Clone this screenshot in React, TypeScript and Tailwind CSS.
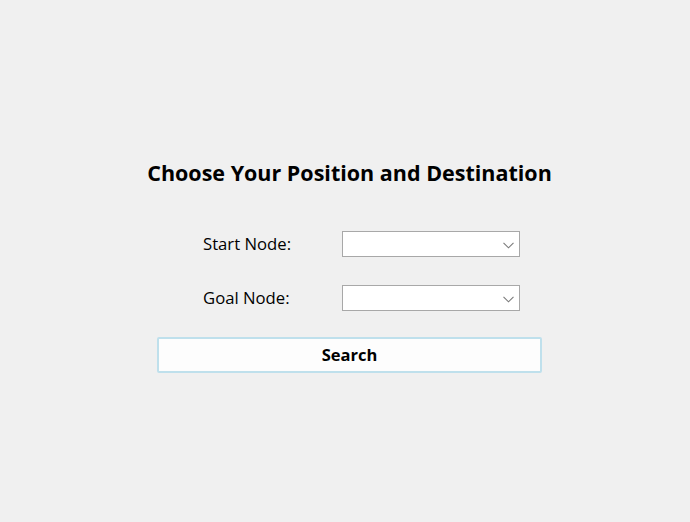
import React from 'react';

const Chevron = () => (
  <svg width="11" height="7" viewBox="0 0 11 7" className="absolute right-[5px] top-[10px]">
    <path d="M0.5 0.8 L5.5 5.8 L10.5 0.8" fill="none" stroke="#7a7a7a" strokeWidth="1.1" />
  </svg>
);

const Combo = () => (
  <div className="relative w-[178px] h-[26px] bg-white border border-[#a8a8a8]">
    <Chevron />
  </div>
);

const App = () => {
  return (
    <div
      className="w-[690px] h-[522px] bg-[#f0f0f0] text-black"
      style={{ fontFamily: '"Open Sans", "Noto Sans", sans-serif' }}
    >
      <div className="ml-[157px] w-[385px] pt-[158px] flex flex-col">
        <h1 className="-mx-[30px] text-center whitespace-nowrap font-bold text-[21.5px] leading-[30px]">
          Choose Your Position and Destination
        </h1>
        <div className="mt-[43px] flex items-center h-[26px]">
          <span className="ml-[46px] w-[139px] text-[16.7px]">Start Node:</span>
          <Combo />
        </div>
        <div className="mt-[28px] flex items-center h-[26px]">
          <span className="ml-[46px] w-[139px] text-[16.7px]">Goal Node:</span>
          <Combo />
        </div>
        <button className="mt-[26px] h-[36px] w-full border-2 border-[#bfe0ec] bg-[#fdfdfd] rounded-[2px] font-bold text-[16.5px]">
          Search
        </button>
      </div>
    </div>
  );
};

export default App;
